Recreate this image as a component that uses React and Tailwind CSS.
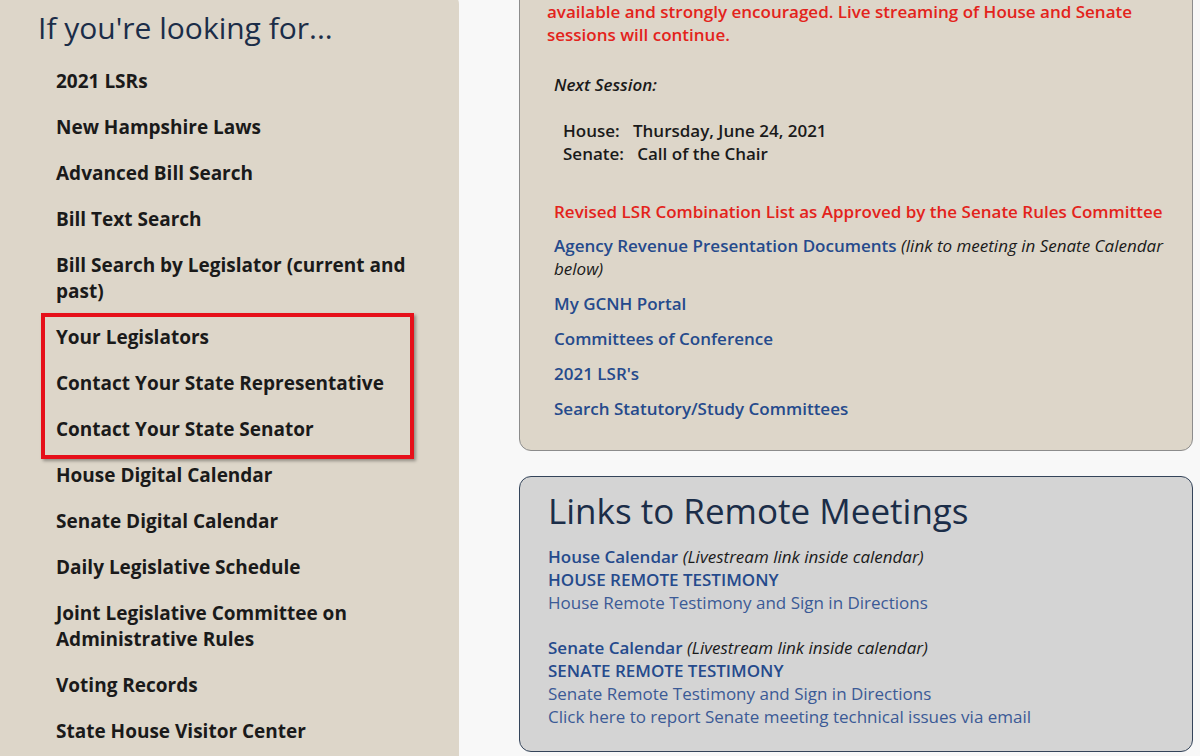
const leftLinks = [
  '2021 LSRs',
  'New Hampshire Laws',
  'Advanced Bill Search',
  'Bill Text Search',
  'Bill Search by Legislator (current and past)',
];

const boxedLinks = ['Your Legislators', 'Contact Your State Representative', 'Contact Your State Senator'];

const moreLinks = [
  'House Digital Calendar',
  'Senate Digital Calendar',
  'Daily Legislative Schedule',
  'Joint Legislative Committee on Administrative Rules',
  'Voting Records',
  'State House Visitor Center',
];

const quickLinks = ['My GCNH Portal', 'Committees of Conference', "2021 LSR's", 'Search Statutory/Study Committees'];

function LeftItem({ children }) {
  return (
    <li className="text-[19px] leading-[26px]">
      <a className="font-bold text-[#1a1a1a]">{children}</a>
    </li>
  );
}

export default function App() {
  return (
    <div className="h-[756px] overflow-hidden bg-[#f8f8f8] font-['Open_Sans',sans-serif]">
      <div className="flex gap-[60px]">
        {/* left sidebar */}
        <aside className="-mt-[6px] w-[459px] shrink-0 rounded-tr-[10px] bg-[#ddd6c9] pl-[38px] pr-[48px] pt-[14px] pb-10">
          <h2 className="text-[30px] leading-[40px] text-[#1b2d48]">If you're looking for...</h2>
          <ul className="mt-[20px] flex flex-col gap-[20px] pl-[18px]">
            {leftLinks.map((t) => (
              <LeftItem key={t}>{t}</LeftItem>
            ))}
            <li className="relative">
              <ul className="flex flex-col gap-[20px]">
                {boxedLinks.map((t) => (
                  <LeftItem key={t}>{t}</LeftItem>
                ))}
              </ul>
              {/* red highlight box */}
              <div className="pointer-events-none absolute -left-[15px] -right-[3px] -top-[11px] -bottom-[17px] border-4 border-[#e6101a] shadow-[2px_2px_3px_rgba(0,0,0,0.35)]" />
            </li>
            {moreLinks.map((t) => (
              <LeftItem key={t}>{t}</LeftItem>
            ))}
          </ul>
        </aside>

        {/* right column */}
        <main className="w-[674px] shrink-0 flex flex-col gap-[25px] text-[17px] leading-[23px]">
          <section className="-mt-[12px] rounded-b-[12px] border border-[#8c8c8c] bg-[#ddd6c9] pl-[27px] pr-[18px] pt-[11px] pb-[30px]">
            <p className="font-semibold text-[#e3231b]">
              available and strongly encouraged. Live streaming of House and Senate sessions will continue.
            </p>
            <div className="pl-[7px]">
              <p className="mt-[27px] font-semibold italic text-[#1a1a1a]">Next Session:</p>
              <div className="mt-[23px] pl-[9px] font-semibold text-[#1a1a1a]">
                <p>House:&nbsp;&nbsp; Thursday, June 24, 2021</p>
                <p>Senate:&nbsp;&nbsp; Call of the Chair</p>
              </div>
              <p className="mt-[35px] font-semibold text-[#e3231b]">
                Revised LSR Combination List as Approved by the Senate Rules Committee
              </p>
              <p className="mt-[11px] text-[#1a1a1a]">
                <a className="font-semibold text-[#254a8c]">Agency Revenue Presentation Documents</a>{' '}
                <em>(link to meeting in Senate Calendar</em> <em>below)</em>
              </p>
              <ul className="mt-[12px] flex flex-col gap-[12px]">
                {quickLinks.map((t) => (
                  <li key={t}>
                    <a className="font-semibold text-[#254a8c]">{t}</a>
                  </li>
                ))}
              </ul>
            </div>
          </section>

          <section className="rounded-[12px] border border-[#34445a] bg-[#d4d4d4] pl-[28px] pr-4 pt-[10px] pb-[23px]">
            <h2 className="text-[35px] leading-[48px] text-[#1b2d48]">Links to Remote Meetings</h2>
            <div className="mt-[10px]">
              <p>
                <a className="font-semibold text-[#254a8c]">House Calendar</a>{' '}
                <em className="text-[#1a1a1a]">(Livestream link inside calendar)</em>
              </p>
              <p className="font-semibold text-[#254a8c]">HOUSE REMOTE TESTIMONY</p>
              <p className="text-[#3b5a96]">House Remote Testimony and Sign in Directions</p>
              <p className="mt-[22px]">
                <a className="font-semibold text-[#254a8c]">Senate Calendar</a>{' '}
                <em className="text-[#1a1a1a]">(Livestream link inside calendar)</em>
              </p>
              <p className="font-semibold text-[#254a8c]">SENATE REMOTE TESTIMONY</p>
              <p className="text-[#3b5a96]">Senate Remote Testimony and Sign in Directions</p>
              <p className="text-[#3b5a96]">Click here to report Senate meeting technical issues via email</p>
            </div>
          </section>
        </main>
      </div>
    </div>
  );
}
